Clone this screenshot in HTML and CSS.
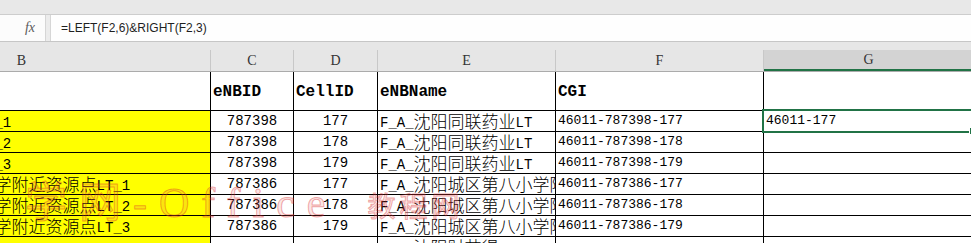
FILE: index.html
```html
<!DOCTYPE html>
<html lang="zh-CN">
<head>
    <meta charset="UTF-8">
    <title>LEFT &amp; RIGHT</title>
    <link rel="stylesheet" href="styles.css">
</head>
<body>
    <div class="top-strip"></div>
    <div class="formula-bar">
        <div class="fx-box"><span class="fx">fx</span></div>
        <div class="formula-input">=LEFT(F2,6)&amp;RIGHT(F2,3)</div>
    </div>

    <div class="col-band">
        <div class="row col-heads">
            <div>B</div>
            <div>C</div>
            <div>D</div>
            <div>E</div>
            <div>F</div>
            <div class="active">G</div>
        </div>
    </div>

    <div class="sheet">
        <div class="row head-row">
            <div class="cell"></div>
            <div class="cell">eNBID</div>
            <div class="cell">CellID</div>
            <div class="cell">eNBName</div>
            <div class="cell">CGI</div>
            <div class="cell"></div>
        </div>

        <div class="row data-row">
            <div class="cell b">F_A_<span class="zh">沈阳市同联药业</span>LT_1</div>
            <div class="cell num">787398</div>
            <div class="cell num">177</div>
            <div class="cell">F_A_<span class="zh">沈阳同联药业</span>LT</div>
            <div class="cell small">46011-787398-177</div>
            <div class="cell small selected">46011-177</div>
        </div>
        <div class="row data-row">
            <div class="cell b">F_A_<span class="zh">沈阳市同联药业</span>LT_2</div>
            <div class="cell num">787398</div>
            <div class="cell num">178</div>
            <div class="cell">F_A_<span class="zh">沈阳同联药业</span>LT</div>
            <div class="cell small">46011-787398-178</div>
            <div class="cell small"></div>
        </div>
        <div class="row data-row">
            <div class="cell b">F_A_<span class="zh">沈阳市同联药业</span>LT_3</div>
            <div class="cell num">787398</div>
            <div class="cell num">179</div>
            <div class="cell">F_A_<span class="zh">沈阳同联药业</span>LT</div>
            <div class="cell small">46011-787398-179</div>
            <div class="cell small"></div>
        </div>
        <div class="row data-row">
            <div class="cell b">F_A_<span class="zh">沈阳市城区第八小学附近资源点</span>LT_1</div>
            <div class="cell num">787386</div>
            <div class="cell num">177</div>
            <div class="cell">F_A_<span class="zh">沈阳城区第八小学附近资源点</span>LT</div>
            <div class="cell small">46011-787386-177</div>
            <div class="cell small"></div>
        </div>
        <div class="row data-row">
            <div class="cell b">F_A_<span class="zh">沈阳市城区第八小学附近资源点</span>LT_2</div>
            <div class="cell num">787386</div>
            <div class="cell num">178</div>
            <div class="cell">F_A_<span class="zh">沈阳城区第八小学附近资源点</span>LT</div>
            <div class="cell small">46011-787386-178</div>
            <div class="cell small"></div>
        </div>
        <div class="row data-row">
            <div class="cell b">F_A_<span class="zh">沈阳市城区第八小学附近资源点</span>LT_3</div>
            <div class="cell num">787386</div>
            <div class="cell num">179</div>
            <div class="cell">F_A_<span class="zh">沈阳城区第八小学附近资源点</span>LT</div>
            <div class="cell small">46011-787386-179</div>
            <div class="cell small"></div>
        </div>
        <div class="row data-row">
            <div class="cell b"></div>
            <div class="cell num"></div>
            <div class="cell num"></div>
            <div class="cell">F_A_<span class="zh">沈阳财苗得</span>LT</div>
            <div class="cell small"></div>
            <div class="cell small"></div>
        </div>
    </div>

    <div class="watermark">学网-Office<span class="wm-zh">教程网</span></div>
</body>
</html>
```

FILE: styles.css
```css
body {
    margin: 0;
    width: 971px;
    height: 243px;
    overflow: hidden;
    position: relative;
    background: #fff;
    font-family: "Liberation Mono", "Noto Sans CJK SC", monospace;
    color: #000;
}

/* ribbon remainder + formula bar */
.top-strip {
    height: 14px;
    background: #e8e8e8;
    border-bottom: 1px solid #cdcdcd;
}

.formula-bar {
    display: flex;
    gap: 4px;
    height: 26px;
    background: #ececec;
    border-bottom: 1px solid #c6c6c6;
}

.fx-box {
    width: 46px;
    background: #fcfcfc;
    border-right: 1px solid #d6d6d6;
    display: flex;
    align-items: center;
    justify-content: flex-end;
    padding-right: 10px;
    box-sizing: border-box;
}

.fx {
    font-family: "Liberation Serif", serif;
    font-style: italic;
    font-size: 14px;
    color: #5a5a5a;
}

.formula-input {
    flex: 1;
    background: #fefefe;
    border-left: 1px solid #d6d6d6;
    padding-left: 10px;
    font-family: "Liberation Sans", "Noto Sans CJK SC", sans-serif;
    font-size: 12px;
    line-height: 26px;
    color: #1f1f1f;
}

/* shared column template */
.row {
    display: grid;
    grid-template-columns: 378px 83px 84px 178px 208px 210px;
    margin-left: -167px;
    width: max-content;
}

.col-band {
    background: #e6e6e6;
    padding-top: 8px;
}

.col-heads {
    height: 21px;
    border-bottom: 1px solid #ababab;
    font-family: "Liberation Serif", serif;
    font-size: 14px;
    color: #333;
}

.col-heads div {
    border-right: 1px solid #c8c8c8;
    display: flex;
    align-items: center;
    justify-content: center;
    box-sizing: border-box;
}

.col-heads .active {
    background: #d3d3d3;
    border-bottom: 2px solid #217346;
}

/* cells */
.cell {
    box-sizing: border-box;
    border-right: 1px solid #000;
    border-bottom: 1px solid #000;
    padding: 0 2px;
    white-space: nowrap;
    overflow: hidden;
    font-size: 14px;
    position: relative;
}

.head-row .cell {
    height: 39px;
    display: flex;
    align-items: flex-end;
    padding-bottom: 9px;
    font-size: 16px;
    font-weight: bold;
}

.data-row .cell {
    height: 21px;
    padding-top: 1px;
    line-height: 18px;
}

.cell.b {
    background: #ffff00;
    text-indent: -10px;
}

.cell.num {
    text-align: center;
}

.cell.small {
    font-size: 13px;
}

.zh {
    font-family: "Noto Sans CJK SC", sans-serif;
    font-size: 17px;
    font-weight: 300;
    line-height: 1;
    vertical-align: -1px;
}

.cell.selected {
    overflow: visible;
}

.cell.selected::after {
    content: "";
    position: absolute;
    left: -2px;
    top: -2px;
    right: -2px;
    bottom: -2px;
    border: 2px solid #217346;
    z-index: 1;
}

.cell.selected::before {
    content: "";
    position: absolute;
    right: -4px;
    bottom: -4px;
    width: 6px;
    height: 6px;
    background: #217346;
    border: 1px solid #fff;
    z-index: 2;
}

/* site watermark over the sheet */
.watermark {
    position: absolute;
    left: 25px;
    top: 182px;
    font-family: "Liberation Serif", "Noto Sans CJK SC", serif;
    font-size: 42px;
    letter-spacing: 12px;
    line-height: 1;
    color: rgba(235, 90, 90, 0.16);
    -webkit-text-stroke: 1px rgba(215, 40, 40, 0.4);
    pointer-events: none;
    white-space: nowrap;
    z-index: 3;
}

.wm-zh {
    margin-left: 30px;
    font-size: 28px;
    letter-spacing: 4px;
}
```
